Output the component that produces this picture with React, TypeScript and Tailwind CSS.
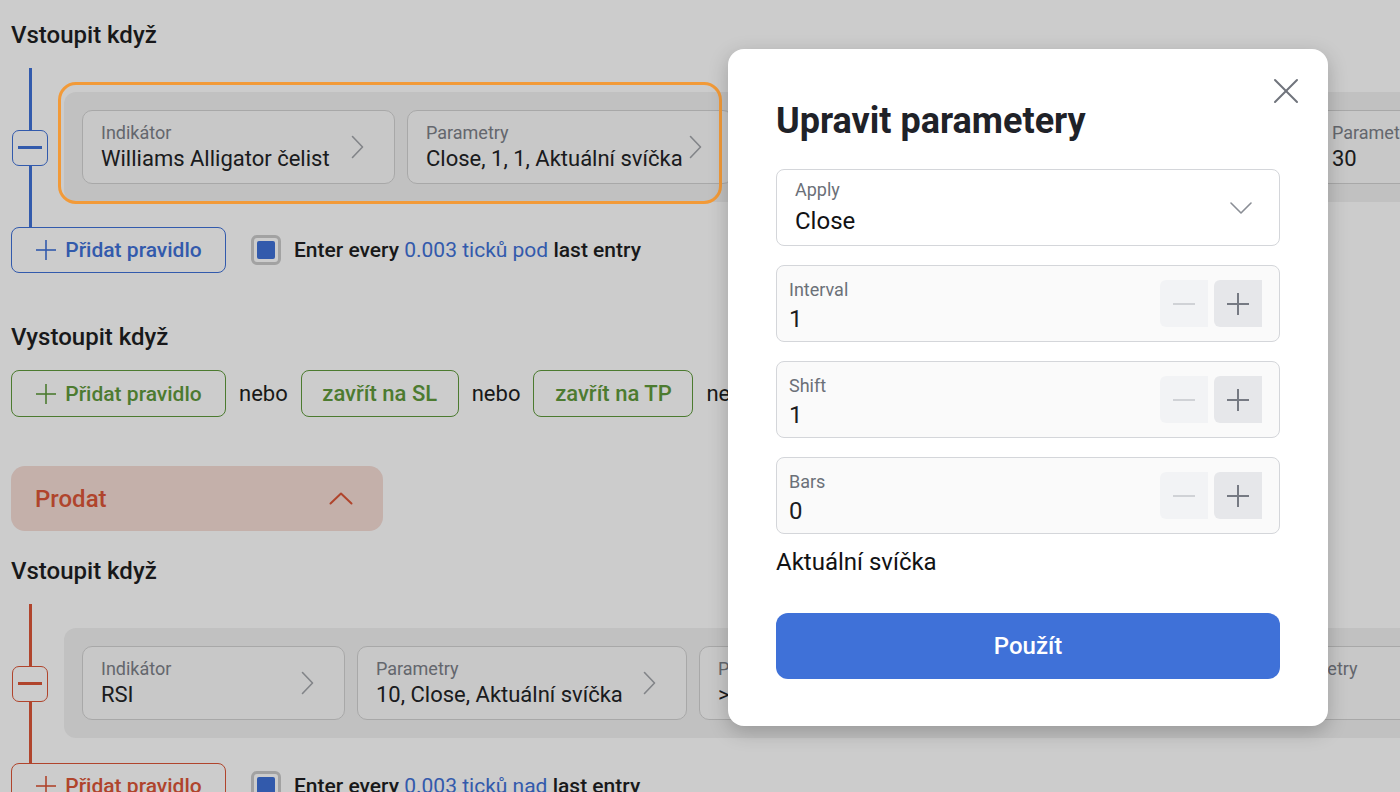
import React from 'react';

const FONT = "font-['Roboto',_sans-serif]";

function ChevronR() {
  return (
    <svg width="13" height="24" viewBox="0 0 13 24" fill="none" className="shrink-0">
      <polyline points="1.5,1.5 11.5,12 1.5,22.5" stroke="#a3a6ab" strokeWidth="1.6" strokeLinecap="round" strokeLinejoin="round" />
    </svg>
  );
}

function PlusIcon({ color }: { color: string }) {
  return (
    <svg width="22" height="22" viewBox="0 0 22 22" fill="none" className="shrink-0">
      <line x1="11" y1="1" x2="11" y2="21" stroke={color} strokeWidth="1.6" />
      <line x1="1" y1="11" x2="21" y2="11" stroke={color} strokeWidth="1.6" />
    </svg>
  );
}

function Card({ label, value, w }: { label: string; value: string; w: string }) {
  return (
    <div className={`shrink-0 h-[74px] rounded-[10px] border border-[#d3d3d3] bg-[#fafafa] pl-[18px] pr-[30px] flex items-center justify-between ${w}`}>
      <div className="flex flex-col whitespace-nowrap">
        <span className="text-[18px] leading-[24px] text-[#7d8189]">{label}</span>
        <span className="text-[22px] leading-[28px] text-[#222326]">{value}</span>
      </div>
      <ChevronR />
    </div>
  );
}

function RuleBlock({
  line,
  cards,
  ring,
}: {
  line: string;
  cards: React.ReactNode;
  ring?: boolean;
}) {
  return (
    <div className="relative mt-[18px] flex">
      <div className="w-[38px] shrink-0 flex flex-col items-center">
        <div className={`w-[3px] flex-1 ${line === 'blue' ? 'bg-[#3f71d8]' : 'bg-[#dc5637]'}`} />
        <div
          className={`w-[36px] h-[36px] rounded-[7px] border bg-white flex items-center justify-center ${
            line === 'blue' ? 'border-[#3f71d8]' : 'border-[#dc5637]'
          }`}
        >
          <div className={`w-[24px] h-[3px] ${line === 'blue' ? 'bg-[#3f71d8]' : 'bg-[#dc5637]'}`} />
        </div>
        <div className={`w-[3px] flex-1 ${line === 'blue' ? 'bg-[#3f71d8]' : 'bg-[#dc5637]'}`} />
      </div>
      <div className="ml-[15px] mt-[24px] mb-[25px] shrink-0 w-max flex gap-[12px] rounded-l-[12px] bg-[#f2f2f2] p-[18px] pr-0">
        {cards}
      </div>
      {ring && (
        <div className="absolute left-[47px] top-[14px] w-[664px] h-[122px] rounded-[18px] border-[3px] border-[#f29a38] z-20" />
      )}
    </div>
  );
}

function AddRow({ color, dir }: { color: 'blue' | 'red'; dir: string }) {
  const btn =
    color === 'blue'
      ? 'border-[#3f71d8] text-[#3f71d8]'
      : 'border-[#dc5637] text-[#dc5637]';
  return (
    <div className="flex items-center">
      <div className={`w-[215px] h-[46px] shrink-0 rounded-[8px] border bg-white flex items-center justify-center gap-[8px] ${btn}`}>
        <PlusIcon color={color === 'blue' ? '#3f71d8' : '#dc5637'} />
        <span className="text-[21px] leading-[28px] font-medium">Přidat pravidlo</span>
      </div>
      <div className="ml-[25px] w-[30px] h-[30px] rounded-[6px] border-[3px] border-[#cbcbcb] bg-white flex items-center justify-center">
        <div className="w-[18px] h-[18px] rounded-[2px] bg-[#3f71d8]" />
      </div>
      <span className="ml-[13px] text-[21px] leading-[28px] font-medium text-[#1e1f22] whitespace-nowrap">
        Enter every <span className="font-normal text-[#3f71d8]">0.003 ticků {dir}</span> last entry
      </span>
    </div>
  );
}

function GreenBtn({ children, w }: { children: React.ReactNode; w: string }) {
  return (
    <div className={`h-[47px] shrink-0 rounded-[8px] border border-[#5f9a3c] bg-white flex items-center justify-center gap-[8px] text-[#5f9a3c] ${w}`}>
      {children}
    </div>
  );
}

function NumberField({ label, value }: { label: string; value: string }) {
  return (
    <div className="mt-[19px] h-[77px] rounded-[8px] border border-[#d4d6da] bg-[#fafafa] pl-[12px] pr-[17px] flex items-start justify-between">
      <div className="flex flex-col pt-[13px]">
        <span className="text-[18px] leading-[22px] text-[#6b7078]">{label}</span>
        <span className="mt-[2px] text-[24px] leading-[32px] text-[#1b1c1f]">{value}</span>
      </div>
      <div className="flex gap-[6px] mt-[14px]">
        <div className="w-[48px] h-[47px] rounded-l-[6px] bg-[#f2f3f5] flex items-center justify-center">
          <svg width="22" height="2" viewBox="0 0 22 2">
            <line x1="0" y1="1" x2="22" y2="1" stroke="#d0d2d6" strokeWidth="2" />
          </svg>
        </div>
        <div className="w-[48px] h-[47px] rounded-l-[6px] bg-[#e6e7ea] flex items-center justify-center">
          <svg width="22" height="22" viewBox="0 0 22 22">
            <line x1="11" y1="0" x2="11" y2="22" stroke="#767a83" strokeWidth="2" />
            <line x1="0" y1="11" x2="22" y2="11" stroke="#767a83" strokeWidth="2" />
          </svg>
        </div>
      </div>
    </div>
  );
}

function Modal() {
  return (
    <div className="absolute left-[728px] top-[49px] w-[600px] h-[677px] rounded-[16px] bg-white shadow-[0_6px_20px_rgba(0,0,0,0.22)] z-30 px-[48px] pt-[50px]">
      <svg width="26" height="26" viewBox="0 0 26 26" className="absolute right-[29px] top-[29px]">
        <line x1="2" y1="2" x2="24" y2="24" stroke="#70747c" strokeWidth="2" strokeLinecap="round" />
        <line x1="24" y1="2" x2="2" y2="24" stroke="#70747c" strokeWidth="2" strokeLinecap="round" />
      </svg>
      <h1 className="text-[36px] leading-[44px] font-bold text-[#1f2228]">Upravit parametery</h1>
      <div className="mt-[26px] h-[77px] rounded-[8px] border border-[#d4d6da] bg-white pl-[18px] pr-[27px] flex items-center justify-between">
        <div className="flex flex-col">
          <span className="text-[18px] leading-[22px] text-[#6b7078]">Apply</span>
          <span className="mt-[4px] text-[24px] leading-[32px] text-[#111214]">Close</span>
        </div>
        <svg width="22" height="12" viewBox="0 0 22 12" fill="none">
          <polyline points="1,1 11,11 21,1" stroke="#8a8e95" strokeWidth="1.6" strokeLinecap="round" strokeLinejoin="round" />
        </svg>
      </div>
      <NumberField label="Interval" value="1" />
      <NumberField label="Shift" value="1" />
      <NumberField label="Bars" value="0" />
      <p className="mt-[14px] text-[24px] leading-[28px] text-[#111214]">Aktuální svíčka</p>
      <div className="mt-[37px] h-[66px] rounded-[12px] bg-[#3f71d8] flex items-center justify-center text-white text-[24px] font-medium">
        Použít
      </div>
    </div>
  );
}

export default function App() {
  return (
    <div className={`relative w-[1400px] h-[792px] overflow-hidden bg-white ${FONT}`}>
      <div className="pl-[11px] pt-[20px]">
        <h2 className="text-[24px] leading-[30px] font-medium text-[#1e1f22]">Vstoupit když</h2>
        <RuleBlock
          line="blue"
          ring
          cards={
            <>
              <Card label="Indikátor" value="Williams Alligator čelist" w="w-[313px]" />
              <Card label="Parametry" value="Close, 1, 1, Aktuální svíčka" w="w-[326px]" />
              <Card label="Porovnání" value="Kříží nahoru" w="w-[556px]" />
              <Card label="Parametry" value="30" w="w-[300px]" />
            </>
          }
        />
        <AddRow color="blue" dir="pod" />

        <h2 className="mt-[49px] text-[24px] leading-[30px] font-medium text-[#1e1f22]">Vystoupit když</h2>
        <div className="mt-[18px] flex items-center gap-[13px] whitespace-nowrap">
          <GreenBtn w="w-[215px]">
            <PlusIcon color="#5f9a3c" />
            <span className="text-[21px] leading-[28px] font-medium">Přidat pravidlo</span>
          </GreenBtn>
          <span className="text-[22px] leading-[28px] text-[#1e1f22]">nebo</span>
          <GreenBtn w="w-[158px]">
            <span className="text-[22px] leading-[28px] font-medium">zavřít na SL</span>
          </GreenBtn>
          <span className="text-[22px] leading-[28px] text-[#1e1f22]">nebo</span>
          <GreenBtn w="w-[160px]">
            <span className="text-[22px] leading-[28px] font-medium">zavřít na TP</span>
          </GreenBtn>
          <span className="text-[22px] leading-[28px] text-[#1e1f22]">nebo</span>
        </div>

        <div className="mt-[49px] w-[372px] h-[65px] rounded-[14px] bg-[#f5dcd5] pl-[24px] pr-[30px] flex items-center justify-between">
          <span className="text-[24px] leading-[30px] font-medium text-[#dc5637]">Prodat</span>
          <svg width="24" height="13" viewBox="0 0 24 13" fill="none">
            <polyline points="1.5,11.5 12,1.5 22.5,11.5" stroke="#dc5637" strokeWidth="2" strokeLinecap="round" strokeLinejoin="round" />
          </svg>
        </div>

        <h2 className="mt-[25px] text-[24px] leading-[30px] font-medium text-[#1e1f22]">Vstoupit když</h2>
        <RuleBlock
          line="red"
          cards={
            <>
              <Card label="Indikátor" value="RSI" w="w-[263px]" />
              <Card label="Parametry" value="10, Close, Aktuální svíčka" w="w-[330px]" />
              <Card label="Porovnání" value="> Větší než" w="w-[545px]" />
              <Card label="Parametry" value="70" w="w-[300px]" />
            </>
          }
        />
        <AddRow color="red" dir="nad" />
      </div>
      <div className="absolute inset-0 bg-black/20 z-10" />
      <Modal />
    </div>
  );
}
